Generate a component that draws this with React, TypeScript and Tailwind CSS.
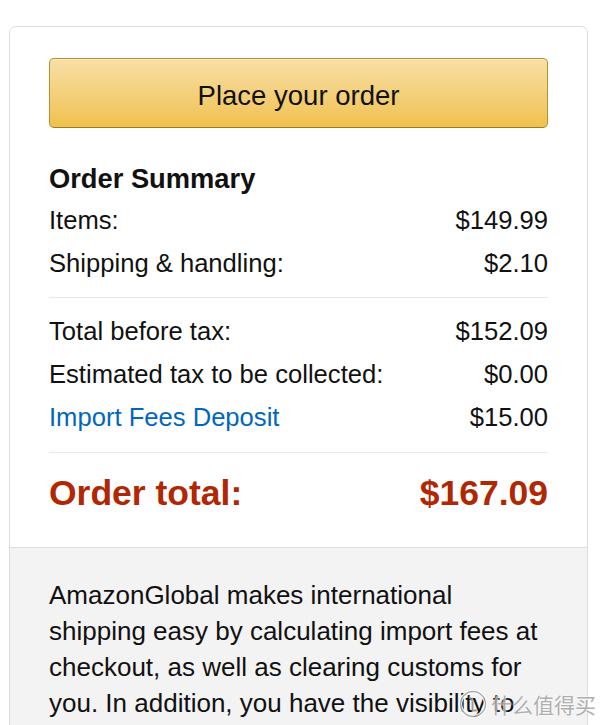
import React from "react";

type Line = { label: string; value: string; link?: boolean };

const topLines: Line[] = [
  { label: "Items:", value: "$149.99" },
  { label: "Shipping & handling:", value: "$2.10" },
];

const taxLines: Line[] = [
  { label: "Total before tax:", value: "$152.09" },
  { label: "Estimated tax to be collected:", value: "$0.00" },
  { label: "Import Fees Deposit", value: "$15.00", link: true },
];

function SummaryRow({ label, value, link }: Line) {
  return (
    <div className="flex h-[43px] items-center justify-between text-[25.6px] leading-[43px]">
      <span className={link ? "text-[#0066c0]" : "text-[#111]"}>{label}</span>
      <span className="text-[#111]">{value}</span>
    </div>
  );
}

export default function App() {
  return (
    <div
      className="relative h-[725px] overflow-hidden bg-white"
      style={{ fontFamily: '"Liberation Sans", Arial, sans-serif' }}
    >
      <div className="ml-[9px] mr-[12px] mt-[26px] overflow-hidden rounded-[7px] border border-[#dddddd]">
        <div className="px-[39px] pt-[31px] pb-[29px]">
          <button
            type="button"
            className="flex h-[70px] w-full items-center justify-center rounded-[5px] border border-[#b8902c] border-b-[#9a7a26] bg-gradient-to-b from-[#f7dfa5] to-[#f0c14b] pt-[5px] text-[27.5px] text-[#111] shadow-[inset_0_1px_0_rgba(255,255,255,0.4)]"
          >
            Place your order
          </button>

          <h3 className="mt-[33px] text-[27.3px] font-bold leading-[36px] text-[#111]">
            Order Summary
          </h3>

          <div className="mt-[2px]">
            {topLines.map((l) => (
              <SummaryRow key={l.label} {...l} />
            ))}
          </div>

          <div className="mt-[12px] border-t border-[#e7e7e7]" />

          <div className="pt-[12px]">
            {taxLines.map((l) => (
              <SummaryRow key={l.label} {...l} />
            ))}
          </div>

          <div className="mt-[13px] border-t border-[#e7e7e7]" />

          <div className="mt-[15px] flex h-[50px] items-center justify-between text-[35.5px] font-bold leading-[50px] text-[#b12704]">
            <span>Order total:</span>
            <span>$167.09</span>
          </div>
        </div>

        <div className="border-t border-[#dddddd] bg-[#f3f3f3] px-[39px] pt-[29px] pb-[40px]">
          <p className="w-[500px] text-[26px] leading-[36px] text-[#111]">
            AmazonGlobal makes international shipping easy by calculating import
            fees at checkout, as well as clearing customs for you. In addition,
            you have the visibility to track your package all the way.
          </p>
        </div>
      </div>

      {/* site watermark */}
      <div className="pointer-events-none absolute bottom-[6px] right-[4px] flex items-center gap-[3px] opacity-90">
        <svg width="30" height="30" viewBox="0 0 30 30" aria-hidden="true">
          <circle cx="15" cy="15" r="12.5" fill="none" stroke="#ffffff" strokeWidth="3.5" />
          <circle cx="15" cy="15" r="12.5" fill="none" stroke="#a5a5a5" strokeWidth="1.4" />
          <path d="M11.5 8.5 L14 11" fill="none" stroke="#909090" strokeWidth="1.8" strokeLinecap="round" />
          <path d="M14.5 13 L14.5 21.5 L18 21.5" fill="none" stroke="#909090" strokeWidth="1.8" strokeLinecap="round" />
        </svg>
        <span
          className="text-[21px] leading-none text-[#a8a8a8]"
          style={{
            fontFamily: '"Noto Sans CJK SC", sans-serif',
            textShadow: "0 0 2px #fff, 0 0 2px #fff",
          }}
        >
          什么值得买
        </span>
      </div>
    </div>
  );
}
